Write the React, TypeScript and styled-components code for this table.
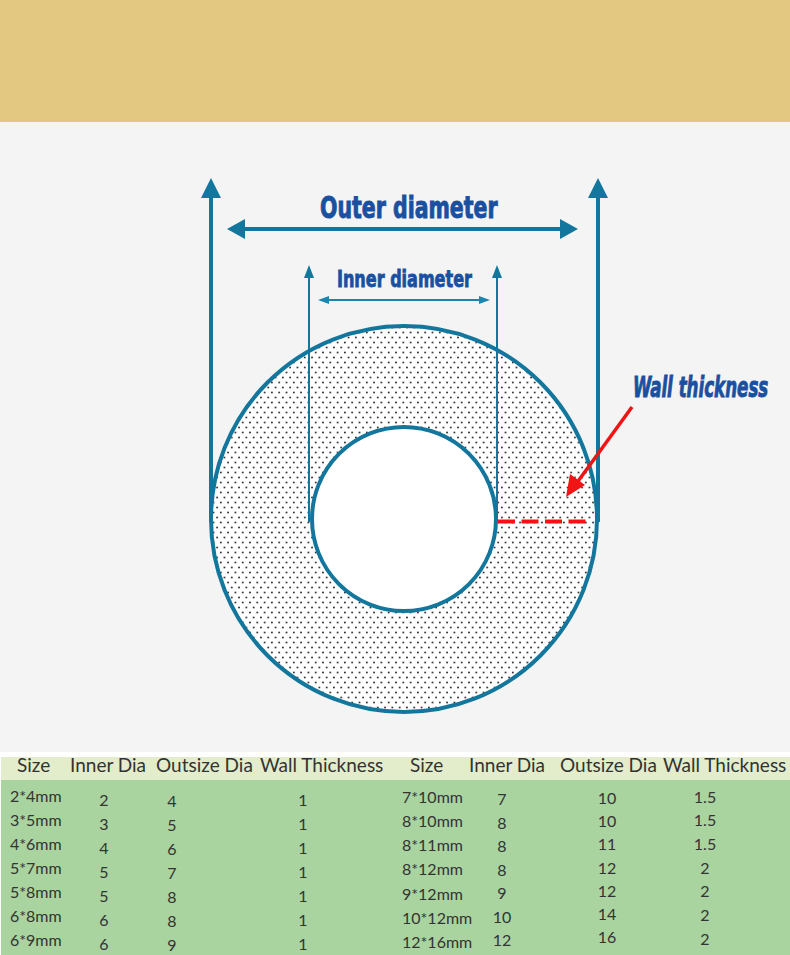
import React from 'react'
import styled, { createGlobalStyle } from 'styled-components'

const GlobalStyle = createGlobalStyle`
  html, body {
    margin: 0;
    padding: 0;
    background: #f4f4f4;
  }
`

const Page = styled.div`
  width: 790px;
  display: flex;
  flex-direction: column;
  font-family: Lato, 'Open Sans', sans-serif;
`

const TopBand = styled.div`
  height: 122px;
  background: #e2c881;
`

const DiagramArea = styled.div`
  height: 630px;
  background: #f4f4f4;

  svg {
    display: block;
  }
`

const TableWrap = styled.div`
  background: #ffffff;
  padding-top: 5px;
  padding-left: 1px;
`

const HeaderRow = styled.div`
  height: 23px;
  background: #e3edcb;
  display: grid;
  grid-template-columns: 16px 53px 86px 104px 150px 59px 91px 103px 1fr;
  align-items: start;
  font-size: 19px;
  line-height: 15px;
  color: #333;
  white-space: nowrap;
`

const BodyGrid = styled.div`
  height: 175px;
  background: #a9d4a0;
  display: grid;
  grid-template-columns: 73px 60px 76px 186px 74px 64px 146px 50px 1fr;
  color: #333;
  font-size: 16px;
  white-space: nowrap;
`

const Column = styled.div<{ $pad: number; $pitch: number; $align: 'left' | 'center'; $indent?: number }>`
  display: flex;
  flex-direction: column;
  padding-top: ${(p) => p.$pad}px;
  padding-left: ${(p) => p.$indent ?? 0}px;
  line-height: ${(p) => p.$pitch}px;
  text-align: ${(p) => p.$align};
`

const headers = ['', 'Size', 'Inner Dia', 'Outsize Dia', 'Wall Thickness', 'Size', 'Inner Dia', 'Outsize Dia', 'Wall Thickness']

const columns: { rows: string[]; pad: number; pitch: number; align: 'left' | 'center'; indent?: number }[] = [
  { rows: ['2*4mm', '3*5mm', '4*6mm', '5*7mm', '5*8mm', '6*8mm', '6*9mm'], pad: 3.5, pitch: 24, align: 'left', indent: 9 },
  { rows: ['2', '3', '4', '5', '5', '6', '6'], pad: 7.5, pitch: 24, align: 'center' },
  { rows: ['4', '5', '6', '7', '8', '8', '9'], pad: 8.5, pitch: 24, align: 'center' },
  { rows: ['1', '1', '1', '1', '1', '1', '1'], pad: 7.5, pitch: 24, align: 'center' },
  { rows: ['7*10mm', '8*10mm', '8*11mm', '8*12mm', '9*12mm', '10*12mm', '12*16mm'], pad: 4.5, pitch: 24.3, align: 'left', indent: 6 },
  { rows: ['7', '8', '8', '8', '9', '10', '12'], pad: 7, pitch: 23.5, align: 'center' },
  { rows: ['10', '10', '11', '12', '12', '14', '16'], pad: 6, pitch: 23.2, align: 'center' },
  { rows: ['1.5', '1.5', '1.5', '2', '2', '2', '2'], pad: 4.5, pitch: 23.7, align: 'center' },
]

const BLUE = '#13779d'
const LABEL = '#1a50a0'
const RED = '#f21414'
const LABEL_FONT = "'DejaVu Sans Condensed', 'DejaVu Sans', sans-serif"

const Diagram: React.FC = () => (
  <svg width="790" height="630" viewBox="0 122 790 630">
    <defs>
      <pattern id="dots" width="7.3" height="10" patternUnits="userSpaceOnUse">
        <rect width="7.3" height="10" fill="#ffffff" />
        <circle cx="1.8" cy="2.5" r="0.95" fill="#2a2a2a" />
        <circle cx="5.45" cy="7.5" r="0.95" fill="#2a2a2a" />
      </pattern>
    </defs>

    {/* tube cross-section */}
    <circle cx="404" cy="519" r="193" fill="url(#dots)" stroke={BLUE} strokeWidth="4" />
    <circle cx="404" cy="519" r="92" fill="#ffffff" stroke={BLUE} strokeWidth="4" />

    {/* outer guides */}
    <line x1="211" y1="196" x2="211" y2="522" stroke={BLUE} strokeWidth="4" />
    <polygon points="211,178 201,198 221,198" fill={BLUE} />
    <line x1="598" y1="196" x2="598" y2="522" stroke={BLUE} strokeWidth="4" />
    <polygon points="598,178 588,198 608,198" fill={BLUE} />
    <line x1="243" y1="229" x2="562" y2="229" stroke={BLUE} strokeWidth="4" />
    <polygon points="227,229 245,219 245,239" fill={BLUE} />
    <polygon points="578,229 560,219 560,239" fill={BLUE} />

    {/* inner guides */}
    <line x1="309" y1="276" x2="309" y2="522" stroke={BLUE} strokeWidth="2" />
    <polygon points="309,265 304,278 314,278" fill={BLUE} />
    <line x1="497" y1="276" x2="497" y2="522" stroke={BLUE} strokeWidth="2" />
    <polygon points="497,265 492,278 502,278" fill={BLUE} />
    <line x1="326" y1="300" x2="482" y2="300" stroke="#1a86ad" strokeWidth="2" />
    <polygon points="318,300 329,296 329,304" fill="#1a86ad" />
    <polygon points="490,300 479,296 479,304" fill="#1a86ad" />

    {/* wall thickness */}
    <line x1="498" y1="521.5" x2="590" y2="521.5" stroke={RED} strokeWidth="4" strokeDasharray="17 6.5" />
    <line x1="632" y1="407" x2="576" y2="484" stroke={RED} strokeWidth="3.5" />
    <polygon points="566,497 570,474 585,485" fill={RED} />

    <g fill={LABEL} stroke={LABEL} fontFamily={LABEL_FONT} fontWeight="bold">
      <text transform="translate(320 218) scale(0.76 1)" fontSize="30" strokeWidth="0.9">
        Outer diameter
      </text>
      <text transform="translate(337 287) scale(0.775 1)" fontSize="23" strokeWidth="0.8">
        Inner diameter
      </text>
      <text transform="translate(633 397) scale(0.64 1)" fontSize="29" fontStyle="italic" strokeWidth="0.9">
        Wall thickness
      </text>
    </g>
  </svg>
)

const App: React.FC = () => (
  <>
    <GlobalStyle />
    <Page>
      <TopBand />
      <DiagramArea>
        <Diagram />
      </DiagramArea>
      <TableWrap>
        <HeaderRow>
          {headers.map((h, i) => (
            <span key={i}>{h}</span>
          ))}
        </HeaderRow>
        <BodyGrid>
          {columns.map((c, i) => (
            <Column key={i} $pad={c.pad} $pitch={c.pitch} $align={c.align} $indent={c.indent}>
              {c.rows.map((r, j) => (
                <span key={j}>{r}</span>
              ))}
            </Column>
          ))}
        </BodyGrid>
      </TableWrap>
    </Page>
  </>
)

export default App
